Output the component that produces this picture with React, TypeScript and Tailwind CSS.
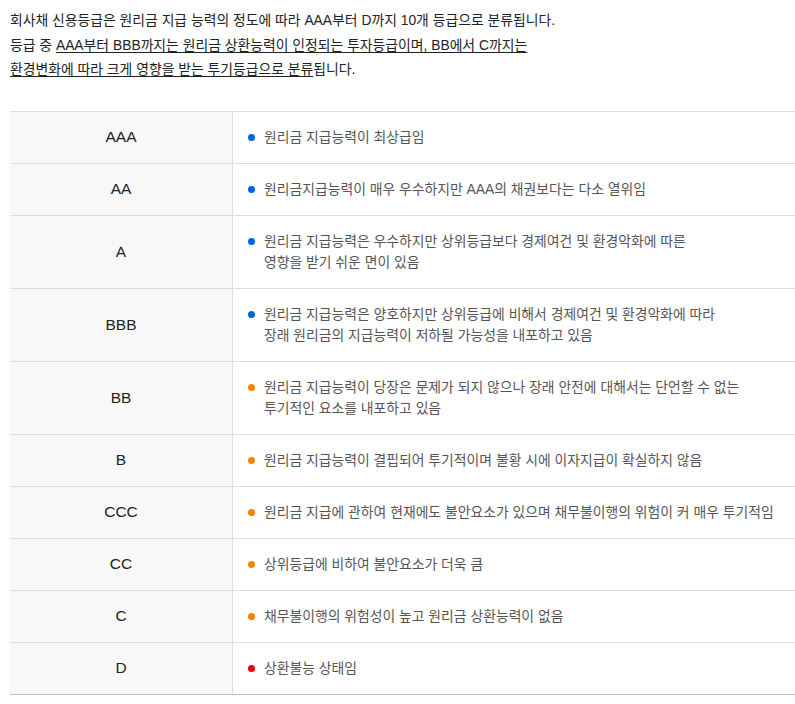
const rows = [
  { grade: 'AAA', color: 'bg-[#0064de]', lines: ['원리금 지급능력이 최상급임'] },
  { grade: 'AA', color: 'bg-[#0064de]', lines: ['원리금지급능력이 매우 우수하지만 AAA의 채권보다는 다소 열위임'] },
  {
    grade: 'A',
    color: 'bg-[#0064de]',
    lines: ['원리금 지급능력은 우수하지만 상위등급보다 경제여건 및 환경악화에 따른', '영향을 받기 쉬운 면이 있음'],
  },
  {
    grade: 'BBB',
    color: 'bg-[#0064de]',
    lines: ['원리금 지급능력은 양호하지만 상위등급에 비해서 경제여건 및 환경악화에 따라', '장래 원리금의 지급능력이 저하될 가능성을 내포하고 있음'],
  },
  {
    grade: 'BB',
    color: 'bg-[#f58300]',
    lines: ['원리금 지급능력이 당장은 문제가 되지 않으나 장래 안전에 대해서는 단언할 수 없는', '투기적인 요소를 내포하고 있음'],
  },
  { grade: 'B', color: 'bg-[#f58300]', lines: ['원리금 지급능력이 결핍되어 투기적이며 불황 시에 이자지급이 확실하지 않음'] },
  { grade: 'CCC', color: 'bg-[#f58300]', lines: ['원리금 지급에 관하여 현재에도 불안요소가 있으며 채무불이행의 위험이 커 매우 투기적임'] },
  { grade: 'CC', color: 'bg-[#f58300]', lines: ['상위등급에 비하여 불안요소가 더욱 큼'] },
  { grade: 'C', color: 'bg-[#f58300]', lines: ['채무불이행의 위험성이 높고 원리금 상환능력이 없음'] },
  { grade: 'D', color: 'bg-[#f00000]', lines: ['상환불능 상태임'] },
]

export default function App() {
  return (
    <div className="min-h-[704px] bg-white pl-[10px] font-['Liberation_Sans','Noto_Sans_CJK_KR',sans-serif]">
      {/* intro */}
      <p className="pt-[8px] text-[13.85px] leading-[24.5px] text-[#222] whitespace-nowrap">
        회사채 신용등급은 원리금 지급 능력의 정도에 따라 AAA부터 D까지 10개 등급으로 분류됩니다.
        <br />
        등급 중 <span className="underline underline-offset-2">AAA부터 BBB까지는 원리금 상환능력이 인정되는 투자등급이며, BB에서 C까지는</span>
        <br />
        <span className="underline underline-offset-2">환경변화에 따라 크게 영향을 받는 투기등급으로 분류</span>됩니다.
      </p>

      {/* grade table */}
      <div className="mt-[29px] border-t border-[#dddddd] border-b border-b-[#bbbbbb]">
        {rows.map((row, i) => (
          <div
            key={row.grade}
            className={`flex ${i < rows.length - 1 ? 'border-b border-[#dddddd]' : ''}`}
          >
            <div className="w-[223px] shrink-0 bg-[#f8f8f8] border-r border-[#dddddd] flex items-center justify-center text-[15.5px] text-[#222]">
              {row.grade}
            </div>
            <div className="flex-1 flex items-start gap-[9px] pl-[15px] py-[15px]">
              <span className={`mt-[7px] h-[7px] w-[7px] shrink-0 rounded-full ${row.color}`} />
              <div className="text-[13.85px] leading-[21px] text-[#555] whitespace-nowrap">
                {row.lines.map((l) => (
                  <div key={l}>{l}</div>
                ))}
              </div>
            </div>
          </div>
        ))}
      </div>
    </div>
  )
}
